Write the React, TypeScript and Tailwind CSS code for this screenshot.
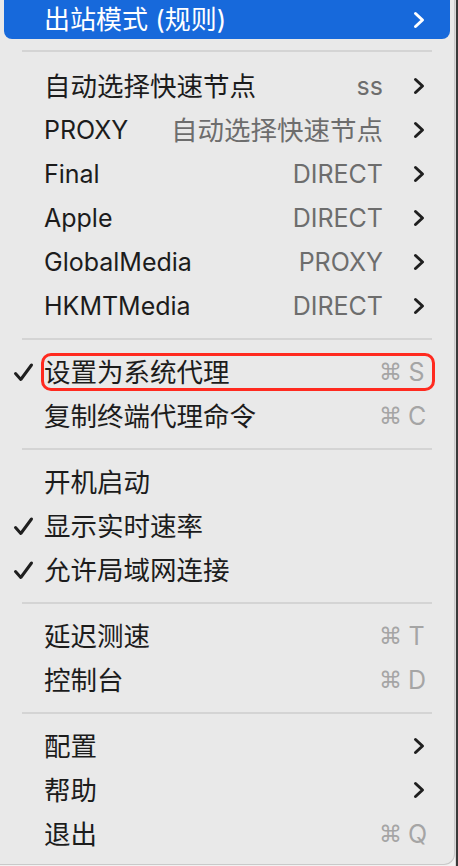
import React from 'react';

type Row =
  | { kind: 'sep' }
  | { kind: 'item'; label: string; value?: string; sub?: boolean; key?: string; checked?: boolean; marked?: boolean };

const rows: Row[] = [
  { kind: 'item', label: '自动选择快速节点', value: 'ss', sub: true },
  { kind: 'item', label: 'PROXY', value: '自动选择快速节点', sub: true },
  { kind: 'item', label: 'Final', value: 'DIRECT', sub: true },
  { kind: 'item', label: 'Apple', value: 'DIRECT', sub: true },
  { kind: 'item', label: 'GlobalMedia', value: 'PROXY', sub: true },
  { kind: 'item', label: 'HKMTMedia', value: 'DIRECT', sub: true },
  { kind: 'sep' },
  { kind: 'item', label: '设置为系统代理', key: 'S', checked: true, marked: true },
  { kind: 'item', label: '复制终端代理命令', key: 'C' },
  { kind: 'sep' },
  { kind: 'item', label: '开机启动' },
  { kind: 'item', label: '显示实时速率', checked: true },
  { kind: 'item', label: '允许局域网连接', checked: true },
  { kind: 'sep' },
  { kind: 'item', label: '延迟测速', key: 'T' },
  { kind: 'item', label: '控制台', key: 'D' },
  { kind: 'sep' },
  { kind: 'item', label: '配置', sub: true },
  { kind: 'item', label: '帮助', sub: true },
  { kind: 'item', label: '退出', key: 'Q' },
];

// CJK glyphs render a touch larger than the latin ones in the menu font
const isCjk = (s: string) => /[\u4e00-\u9fff]/.test(s);

function Chevron({ white }: { white?: boolean }) {
  return (
    <svg width="12" height="18" viewBox="0 0 12 18" className="shrink-0">
      <path
        d="M2.5 2.5 L9.5 9 L2.5 15.5"
        fill="none"
        stroke={white ? '#ffffff' : '#1f1f1f'}
        strokeWidth="3"
        strokeLinecap="round"
        strokeLinejoin="round"
      />
    </svg>
  );
}

function Check() {
  return (
    <svg width="21" height="21" viewBox="0 0 21 21">
      <path
        d="M2.5 11.5 L7.8 17.5 L18.5 3"
        fill="none"
        stroke="#1f1f1f"
        strokeWidth="3"
        strokeLinecap="round"
        strokeLinejoin="round"
      />
    </svg>
  );
}

export default function App() {
  return (
    <div className="flex w-[458px] h-[866px] bg-[#f2f2f2] font-['Inter','Noto_Sans_CJK_SC',sans-serif] text-[25px] leading-none text-[#1c1c1c]">
      <div className="flex flex-col w-[455px] h-[865px] bg-[#e9e9e9] border-r border-b border-[#c9c9c9] rounded-br-[11px]">
        {/* highlighted row, top clipped by the screen */}
        <div className="px-[4px]">
          <div className="flex items-center h-[39px] pl-[40px] pr-[25px] bg-[#1769db] rounded-b-[8px] text-white">
            <span className="flex-1 text-[26px]">出站模式 (规则)</span>
            <Chevron white />
          </div>
        </div>
        <div className="flex items-center h-[25px] px-[22px] pb-[1px]">
          <div className="w-full h-[2px] bg-[#d4d4d4]" />
        </div>

        {rows.map((row, i) =>
          row.kind === 'sep' ? (
            <div key={i} className="flex items-center h-[22px] px-[22px]">
              <div className="w-full h-[2px] bg-[#d4d4d4]" />
            </div>
          ) : (
            <div key={i} className="relative flex items-center h-[44px] pl-[13px] pr-[29px]">
              <div className="w-[31px] shrink-0 flex items-center">{row.checked && <Check />}</div>
              <span className={`flex-1 whitespace-nowrap ${isCjk(row.label) ? 'text-[26.5px]' : ''}`}>{row.label}</span>
              {row.value && (
                <span className={`mr-[30px] text-[#6d6d6d] whitespace-nowrap ${isCjk(row.value) ? 'text-[26.5px]' : ''}`}>
                  {row.value}
                </span>
              )}
              {row.sub && <Chevron />}
              {row.key && (
                <span className="flex items-center gap-[6px] text-[#a5a5a5]">
                  <span className="font-['DejaVu_Sans',sans-serif] text-[23px]">⌘</span>
                  <span className="w-[17px] text-center">{row.key}</span>
                </span>
              )}
              {row.marked && (
                <div className="absolute left-[41px] right-[19px] top-[3px] bottom-[3px] border-[3.5px] border-[#ff2a1f] rounded-[10px]" />
              )}
            </div>
          ),
        )}
      </div>
      <div className="flex-1 bg-[#3a3a3a] border-l border-[#d8d8d8]" />
    </div>
  );
}
